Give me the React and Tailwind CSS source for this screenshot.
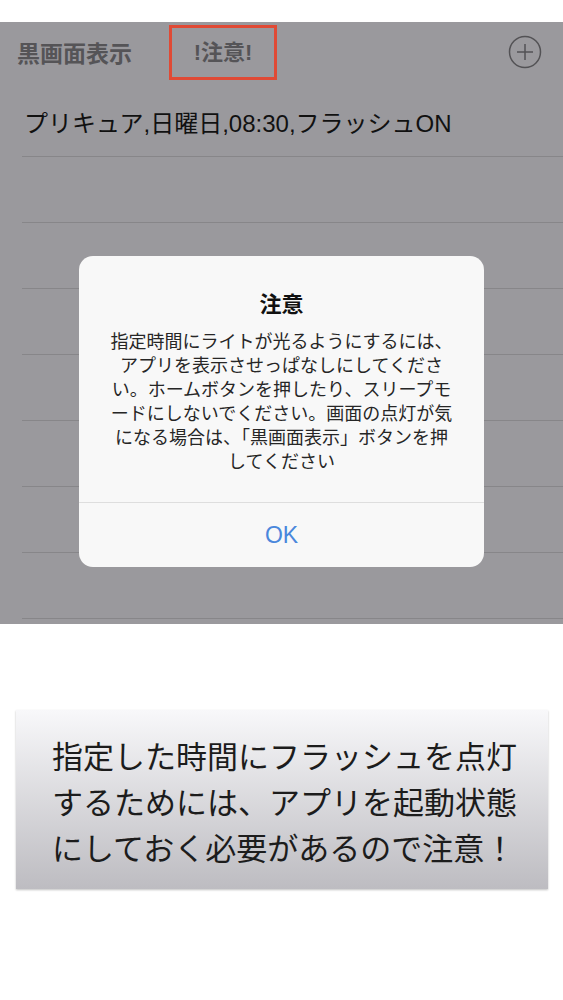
export default function App() {
  const rows = [
    'プリキュア,日曜日,08:30,フラッシュON',
    '',
    '',
    '',
    '',
    '',
    '',
    '',
  ];

  return (
    <div className="w-[563px] h-[1000px] bg-white font-['Noto_Sans_CJK_JP','Noto_Sans',sans-serif] overflow-hidden">
      <div className="h-[22px]" />

      {/* dimmed app screen */}
      <div className="relative h-[602px] bg-[#9a999d] overflow-hidden">
        <div className="flex h-[60px] items-center">
          <span className="ml-[17px] text-[23px] font-bold text-[#555457]">黒画面表示</span>
          <div className="ml-[37px] flex h-[55px] w-[108px] items-center justify-center border-[3px] border-[#e04a35]">
            <span className="font-['Liberation_Sans','Noto_Sans_CJK_JP',sans-serif] text-[22px] font-bold text-[#555457]">!注意!</span>
          </div>
          <svg className="ml-auto mr-[21px]" width="34" height="34" viewBox="0 0 34 34" fill="none" stroke="#535255" strokeWidth="1.5">
            <circle cx="17" cy="17" r="15.5" />
            <path d="M17 9v16M9 17h16" />
          </svg>
        </div>

        <div className="mt-[9px]">
          {rows.map((r, i) => (
            <div key={i} className="ml-[22px] flex h-[66px] items-center border-b border-[#878689]">
              <span className="ml-[2px] font-['Liberation_Sans','Noto_Sans_CJK_JP',sans-serif] text-[24px] text-[#111]">{r}</span>
            </div>
          ))}
        </div>

        {/* alert */}
        <div className="absolute left-[79px] top-[234px] w-[405px] h-[311px] rounded-[14px] bg-[#f8f8f8] flex flex-col">
          <div className="pt-[31px] text-center text-[22px] font-bold leading-[30px] text-[#111]">注意</div>
          <p className="mt-[11px] text-center text-[18px] leading-[24px] text-[#262626]">
            指定時間にライトが光るようにするには、
            <br />
            アプリを表示させっぱなしにしてくださ
            <br />
            い。ホームボタンを押したり、スリープモ
            <br />
            ードにしないでください。画面の点灯が気
            <br />
            になる場合は、「黒画面表示」ボタンを押
            <br />
            してください
          </p>
          <div className="mt-auto flex h-[65px] items-center justify-center border-t border-[#dedede]">
            <span className="font-['Liberation_Sans',sans-serif] text-[23px] text-[#4a87dc]">OK</span>
          </div>
        </div>
      </div>

      {/* caption */}
      <div className="mt-[86px] ml-[16px] flex h-[179px] w-[532px] flex-col justify-center bg-gradient-to-b from-[#f8f8fa] to-[#bdbcc1] pl-[36px] pt-[2px] shadow-[0_1px_2px_rgba(0,0,0,0.25)]">
        <p className="text-[31px] leading-[46px] text-[#1c1c1c]">
          指定した時間にフラッシュを点灯
          <br />
          するためには、アプリを起動状態
          <br />
          にしておく必要があるので注意！
        </p>
      </div>
    </div>
  );
}
